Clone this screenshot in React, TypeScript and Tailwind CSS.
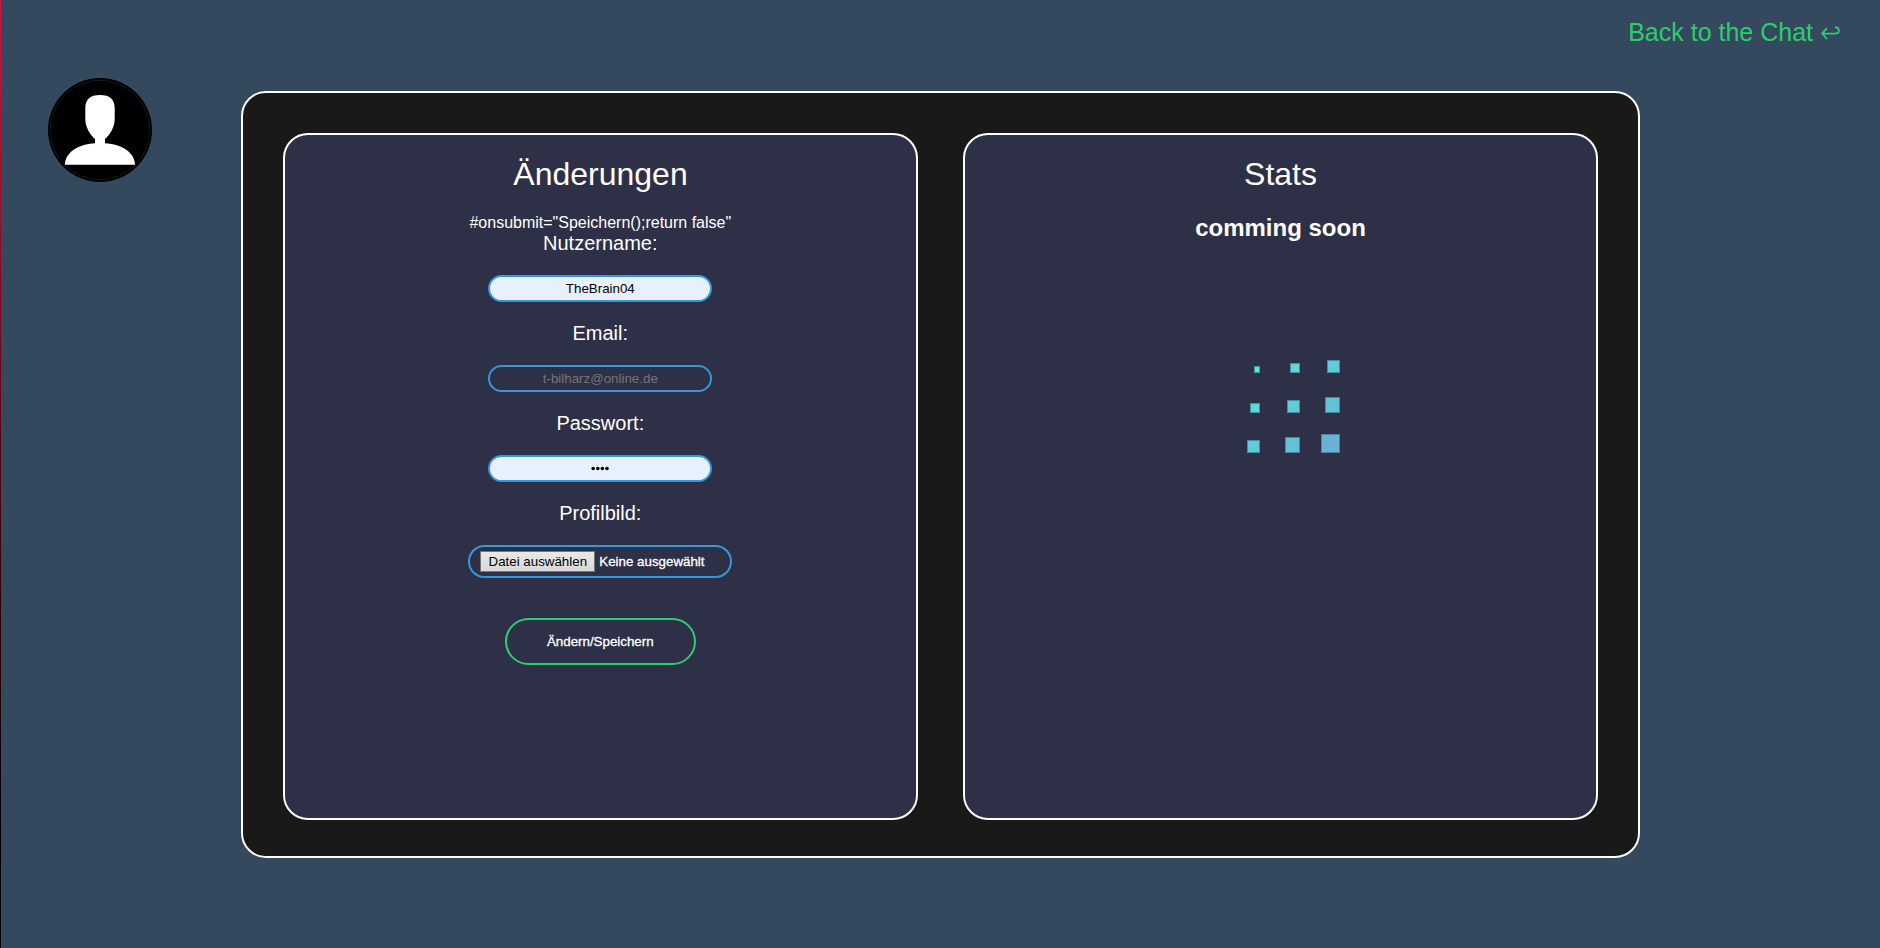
import type { ReactNode } from "react";

const tiles = [
  "w-[6px] h-[7px] bg-[#5be3dc]",
  "w-[10px] h-[10px] bg-[#5dd8d9]",
  "w-[13px] h-[13px] bg-[#5fcdd7]",
  "w-[10px] h-[10px] bg-[#5dd8d9]",
  "w-[13px] h-[13px] bg-[#5fcdd7]",
  "w-[15px] h-[16px] bg-[#63c0d5]",
  "w-[13px] h-[13px] bg-[#5fcdd7]",
  "w-[15px] h-[16px] bg-[#63c0d5]",
  "w-[19px] h-[19px] bg-[#68b2d3]",
];

function Panel({ title, children }: { title: string; children: ReactNode }) {
  return (
    <section className="flex w-[635px] flex-col items-center rounded-[25px] border-2 border-white bg-[#2e3047] pt-[20px]">
      <h1 className="text-[32px] leading-[38px]">{title}</h1>
      {children}
    </section>
  );
}

function Label({ children }: { children: ReactNode }) {
  return <label className="block text-[20px] leading-[23px]">{children}</label>;
}

const field =
  "mt-[20px] mb-[20px] block h-[27px] w-[224px] rounded-full border-2 border-[#3498db] text-center text-[13.333px] outline-none";

function Avatar() {
  return (
    <svg className="h-[104px] w-[104px]" viewBox="0 0 104 104">
      <circle cx="52" cy="52" r="52" fill="#000" />
      <circle cx="52" cy="52" r="49.8" fill="none" stroke="#34495e" strokeOpacity=".55" strokeWidth=".6" />
      <path
        d="M52 17C62 17 66.4 21 66.7 30V41C66.7 49 62 57 57 61V65.3C74 66 87 75 87 86.7H17C17 75 30 66 47 65.3V61C42 57 37.3 49 37.3 41V30C37.6 21 42 17 52 17Z"
        fill="#fff"
      />
    </svg>
  );
}

export default function App() {
  return (
    <div className="flex h-[948px] w-[1880px] overflow-hidden bg-[#34495e] font-['Liberation_Sans',Arial,sans-serif] text-white">
      <div className="w-px shrink-0 bg-linear-to-b from-[#dc143c] to-black" />
      <div className="flex flex-1 flex-col">
        <header className="flex h-[78px] items-start justify-end pt-[18px] pr-[40.5px]">
          <a className="flex items-center text-[25px] leading-[29px] text-[#2ecc71]">
            Back to the Chat
            <svg className="ml-[7.5px] h-[14px] w-[19px]" viewBox="0 0 19 14" fill="none" stroke="currentColor" strokeWidth="1.8">
              <path d="M6 2.2L1.2 7.6L6 13M1.4 7.6H14C19.2 7.6 19.2 2.2 14.2 .8" />
            </svg>
          </a>
        </header>
        <div className="flex">
          <div className="w-[240px] shrink-0 pl-[47px]">
            <Avatar />
          </div>
          <main className="mt-[13px] flex h-[767px] w-[1399px] justify-between rounded-[25px] border-2 border-white bg-[#191919] px-[40px] pt-[40px] pb-[36px]">
            <Panel title="Änderungen">
              <form className="flex flex-col items-center pr-[0.4px]" onSubmit={(e) => e.preventDefault()}>
                <p className="mt-[21px] text-[16px] leading-[18px]">#onsubmit="Speichern();return false"</p>
                <Label>Nutzername:</Label>
                <input className={`${field} bg-[#e8f0fe] text-black`} defaultValue="TheBrain04" />
                <Label>Email:</Label>
                <input className={`${field} bg-transparent placeholder:text-[#757575]`} placeholder="t-bilharz@online.de" />
                <Label>Passwort:</Label>
                <div className={`${field} flex items-center justify-center bg-[#e8f0fe]`}>
                  <svg className="h-[5px] w-[18px]" viewBox="0 0 18 5">
                    {[0, 1, 2, 3].map((i) => (
                      <circle key={i} cx={2.2 + i * 4.6} cy="2.5" r="1.8" />
                    ))}
                  </svg>
                </div>
                <Label>Profilbild:</Label>
                <div className="mt-[20px] flex h-[33px] w-[264px] items-center rounded-full border-2 border-[#3498db] pl-[10px] text-[13.333px]">
                  <button type="button" className="h-[21px] w-[115px] border border-[#767676] bg-linear-to-b from-[#e9e9e9] to-[#d8d8d8] leading-[19px] whitespace-nowrap text-black">
                    Datei auswählen
                  </button>
                  <span className="ml-[4px] [-webkit-text-stroke:0.3px_white]">Keine ausgewählt</span>
                </div>
                <button className="mt-[40px] h-[47px] w-[191px] rounded-full border-2 border-[#2ecc71] text-[13.333px] [-webkit-text-stroke:0.3px_white]">
                  Ändern/Speichern
                </button>
              </form>
            </Panel>
            <Panel title="Stats">
              <h2 className="mt-[21px] text-[24px] leading-[28px] font-bold">comming soon</h2>
              <div className="mt-[91px] mr-[2px] grid grid-cols-[40px_40px_40px] grid-rows-[40px_40px_40px] items-end justify-items-end">
                {tiles.map((tile, i) => (
                  <div key={i} className={`${tile} border border-[#3f7085]/70`} />
                ))}
              </div>
            </Panel>
          </main>
        </div>
      </div>
    </div>
  );
}
